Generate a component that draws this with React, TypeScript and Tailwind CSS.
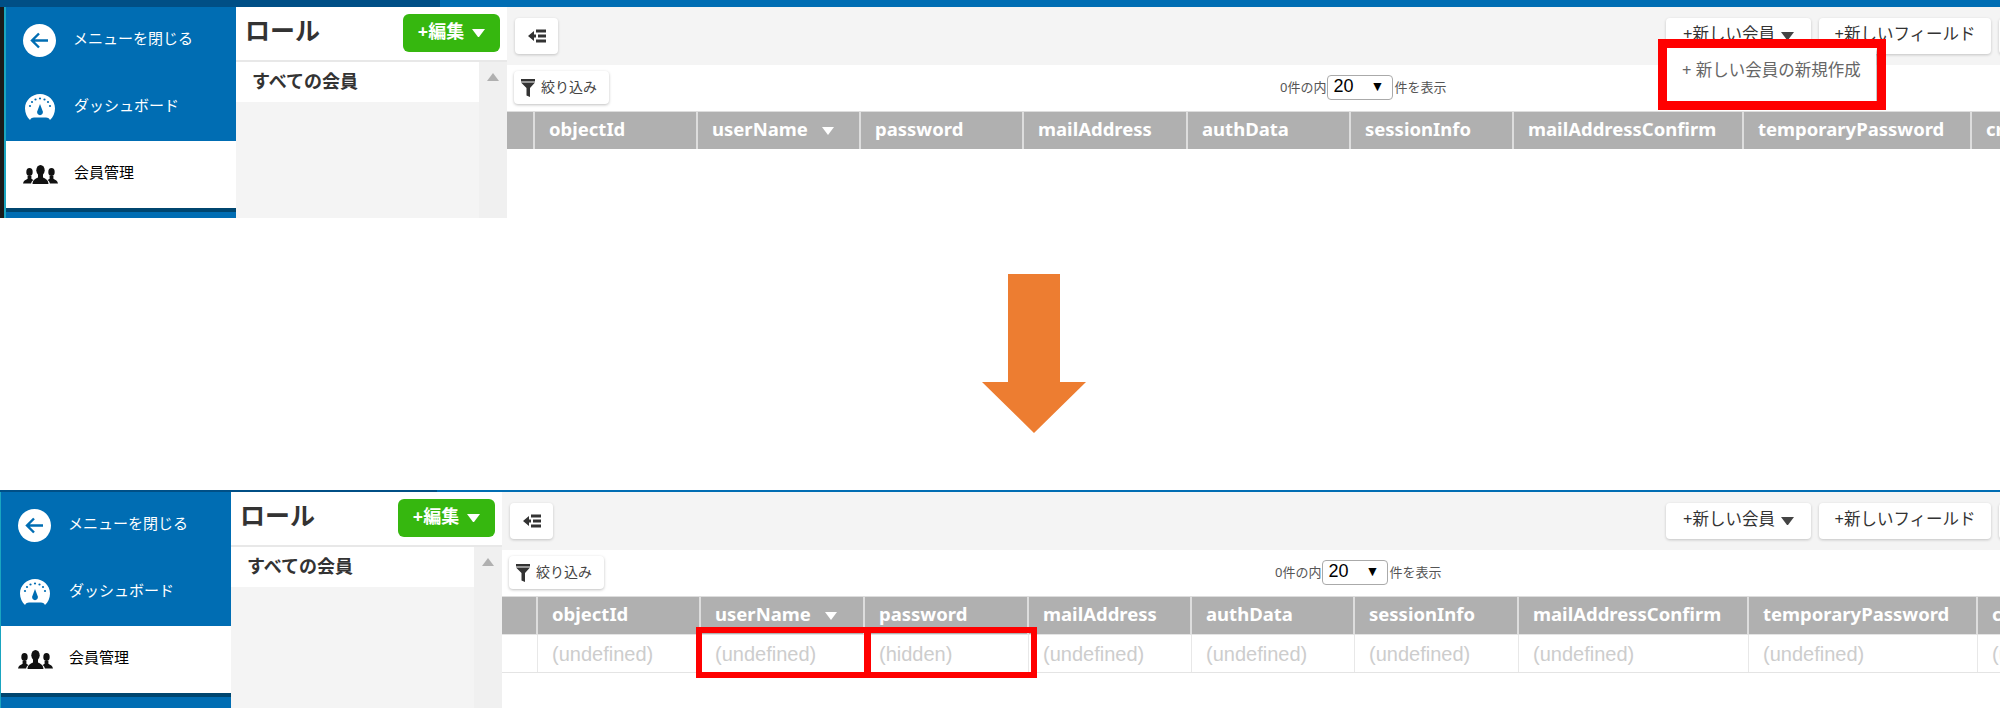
const jp = "font-['Noto_Sans','Noto_Sans_CJK_JP',sans-serif]"

interface Column {
  name: string
  width: string
  sorted?: boolean
  value?: string
}

const topColumns: Column[] = [
  { name: 'objectId', width: 'w-[163px]' },
  { name: 'userName', width: 'w-[163px]', sorted: true },
  { name: 'password', width: 'w-[163px]' },
  { name: 'mailAddress', width: 'w-[164px]' },
  { name: 'authData', width: 'w-[163px]' },
  { name: 'sessionInfo', width: 'w-[163px]' },
  { name: 'mailAddressConfirm', width: 'w-[230px]' },
  { name: 'temporaryPassword', width: 'w-[228px]' },
  { name: 'createDate', width: 'w-[163px]' },
]

const bottomColumns: Column[] = [
  { name: 'objectId', width: 'w-[163px]' },
  { name: 'userName', width: 'w-[164px]', sorted: true },
  { name: 'password', width: 'w-[164px]', value: '(hidden)' },
  { name: 'mailAddress', width: 'w-[163px]' },
  { name: 'authData', width: 'w-[163px]' },
  { name: 'sessionInfo', width: 'w-[164px]' },
  { name: 'mailAddressConfirm', width: 'w-[230px]' },
  { name: 'temporaryPassword', width: 'w-[229px]' },
  { name: 'createDate', width: 'w-[163px]' },
]

function BackIcon() {
  return (
    <svg width="33" height="33" viewBox="0 0 33 33">
      <circle cx="16.5" cy="16.5" r="16.5" fill="#fff" />
      <path d="M25 16.5H9.500M16 9.500l-7 7 7 7" fill="none" stroke="#006db3" strokeWidth="2.4" />
    </svg>
  )
}

function GaugeIcon() {
  return (
    <svg width="30" height="28" viewBox="0 0 30 28">
      <path d="M15 0C6.700 0 0 6.500 0 14.500c0 4.500 2 8.700 5 11.500 1-1.600 2.400-2.400 4-2.400h12c1.600 0 3 .8 4 2.400 3-2.800 5-7 5-11.500C30 6.500 23.300 0 15 0z" fill="#fff" />
      <g fill="#006db3">
        <circle cx="5" cy="12" r="1.100" />
        <circle cx="7" cy="8" r="1.100" />
        <circle cx="10.500" cy="5.500" r="1.100" />
        <circle cx="15" cy="4.500" r="1.100" />
        <circle cx="19.500" cy="5.500" r="1.100" />
        <circle cx="23" cy="8" r="1.100" />
        <circle cx="25" cy="12" r="1.100" />
        <path d="M15 10l2.800 7.500a2.900 2.900 0 1 1-5.600 0z" />
      </g>
    </svg>
  )
}

function MembersIcon() {
  return (
    <svg width="35" height="19" viewBox="0 0 35 19" fill="#111">
      <ellipse cx="6.500" cy="7" rx="3.200" ry="4" />
      <path d="M0 18.500c.5-3 2.300-3.500 4.600-4.800V11h3.800v2.700c.8.500 1.500.8 2 1.200-1.300 1-2 2-2.300 3.600z" />
      <ellipse cx="28.500" cy="7" rx="3.200" ry="4" />
      <path d="M35 18.500c-.5-3-2.300-3.500-4.600-4.800V11h-3.800v2.700c-.8.500-1.500.8-2 1.200 1.300 1 2 2 2.300 3.600z" />
      <ellipse cx="17.500" cy="5.200" rx="4.200" ry="5.200" />
      <path d="M9.500 19c.3-4 2.500-5 5.500-6.500V9h5v3.500c3 1.500 5.200 2.500 5.500 6.500z" />
    </svg>
  )
}

function CollapseIcon() {
  return (
    <svg width="18" height="14" viewBox="0 0 18 14" fill="#333">
      <path d="M0 7l6-5v3.500h2v3H6V12z" />
      <path d="M8 .5h10v3H8zM10 5.500h8v3h-8zM8 10.500h10v3H8z" />
    </svg>
  )
}

function FilterIcon() {
  return (
    <svg width="14" height="18" viewBox="0 0 14 18" fill="#333">
      <path d="M0 0h14v2.500H0zM0 3.500h14L9 9v9l-3.500-1.500V9z" />
    </svg>
  )
}

function Triangle({ className }: { className: string }) {
  return (
    <svg viewBox="0 0 12 8" className={className}>
      <path d="M0 0h12L6 8z" fill="currentColor" />
    </svg>
  )
}

function ToolButton({ children, className }: { children?: React.ReactNode; className: string }) {
  return (
    <div className={`flex h-[36px] shrink-0 items-center rounded bg-white text-[16.5px] text-[#333] shadow-[0_1px_3px_rgba(0,0,0,0.2)] ${className}`}>
      {children}
    </div>
  )
}

function Sidebar() {
  return (
    <div className="flex w-[230px] shrink-0 flex-col bg-[#006db3] text-[15px]">
      <div className="flex h-[67px] items-center gap-[17px] pl-[17px] text-white">
        <BackIcon />
        <span className="pb-[5px]">メニューを閉じる</span>
      </div>
      <div className="flex h-[67px] items-center gap-[19px] pl-[19px] text-white">
        <GaugeIcon />
        <span className="pb-[4px]">ダッシュボード</span>
      </div>
      <div className="flex h-[67px] items-center gap-[16px] bg-white pl-[17px] text-black">
        <MembersIcon />
        <span className="pb-[5px]">会員管理</span>
      </div>
      <div className="h-[4px] bg-[#00466f]" />
    </div>
  )
}

function RolePanel() {
  return (
    <div className="flex w-[271px] shrink-0 flex-col bg-[#f4f4f4]">
      <div className="flex h-[55px] items-start justify-between border-b-2 border-[#e8e8e8] bg-white pl-[9px] pr-[7px] pt-[7px]">
        <span className="text-[25px] leading-[32px] font-bold text-[#333]">ロール</span>
        <div className="flex h-[38px] w-[97px] items-center justify-center gap-[8px] rounded-md bg-[#36b70f] text-[18px] font-bold text-white">
          <span className="pb-[3px]">+編集</span>
          <Triangle className="w-[13px] text-white" />
        </div>
      </div>
      <div className="flex flex-1">
        <div className="h-[40px] w-[243px] bg-white pl-[16px] text-[18px] leading-[38px] font-bold text-[#333]">
          すべての会員
        </div>
        <div className="flex flex-1 justify-center bg-[#f0f0f0] pt-[11px]">
          <Triangle className="h-[8px] w-[14px] rotate-180 text-[#b0b0b0]" />
        </div>
      </div>
    </div>
  )
}

function MemberTable({ columns, hasRow, firstCol }: { columns: Column[]; hasRow?: boolean; firstCol: string }) {
  return (
    <div className="flex flex-col">
      <div className="flex h-[38px] border-t border-[#ddd] bg-[#b0b0b0] font-['Noto_Sans',sans-serif] text-[18.5px] font-bold text-white">
        <div className={`shrink-0 border-r-2 border-[#ddd] ${firstCol}`} />
        {columns.map(col => (
          <div key={col.name} className={`flex shrink-0 items-center gap-[14px] border-r-2 border-[#ddd] pb-[3px] pl-[14px] ${col.width}`}>
            {col.name}
            {col.sorted && <Triangle className="mt-[4px] w-[12px] text-white" />}
          </div>
        ))}
      </div>
      {hasRow && (
        <div className="flex h-[39px] border-t border-b border-[#e4e4e4] font-['Liberation_Sans',sans-serif] text-[20px] text-[#cdcdcd]">
          <div className={`shrink-0 border-r border-[#e8e8e8] ${firstCol}`} />
          {columns.map(col => (
            <div key={col.name} className={`flex shrink-0 items-center border-r border-[#e8e8e8] pl-[14px] ${col.width}`}>
              {col.value ?? '(undefined)'}
            </div>
          ))}
        </div>
      )}
    </div>
  )
}

function MainArea({ columns, hasRow, firstCol }: { columns: Column[]; hasRow?: boolean; firstCol: string }) {
  return (
    <div className="flex min-w-0 flex-1 flex-col overflow-hidden bg-white">
      <div className="flex h-[58px] shrink-0 items-center bg-[#f4f4f4] pl-[8px]">
        <ToolButton className="w-[43px] justify-center">
          <CollapseIcon />
        </ToolButton>
        <div className="-mr-[99px] ml-auto flex gap-[8px]">
          <ToolButton className="w-[145px] justify-center gap-[6px]">
            <span className="pb-[4px]">+新しい会員</span>
            <Triangle className="w-[13px] text-[#444]" />
          </ToolButton>
          <ToolButton className="w-[172px] justify-center">
            <span className="pb-[4px]">+新しいフィールド</span>
          </ToolButton>
          <ToolButton className="w-[100px]" />
        </div>
      </div>
      <div className="flex h-[46px] shrink-0 items-center pb-[1px] pl-[7px]">
        <div className="flex h-[33px] w-[95px] items-center gap-[6px] rounded bg-white pl-[7px] text-[14px] text-[#444] shadow-[0_1px_3px_rgba(0,0,0,0.25)]">
          <FilterIcon />
          <span className="pb-[2px]">絞り込み</span>
        </div>
        <div className="ml-[671px] flex items-center text-[13px] text-[#555]">
          0件の内
          <div className="mx-[1px] flex h-[25px] w-[66px] items-center justify-between rounded-sm border border-[#aaa] bg-white pl-[5px] pr-[8px] font-['Liberation_Sans',sans-serif] text-[18px] text-black">
            <span className="pb-[2px]">20</span>
            <span className="pb-[2px] text-[14px]">▼</span>
          </div>
          件を表示
        </div>
      </div>
      <MemberTable columns={columns} hasRow={hasRow} firstCol={firstCol} />
    </div>
  )
}

function Annotation({ className }: { className: string }) {
  return <div className={`absolute border-[#ff0000] ${className}`} />
}

export default function App() {
  return (
    <div className={`flex h-[708px] w-[2000px] flex-col overflow-hidden bg-white ${jp}`}>
      {/* before */}
      <div className="relative h-[218px] shrink-0 overflow-hidden">
        <div className="flex h-[7px] bg-[#006db3]">
          <div className="w-[440px] bg-[#004f86]" />
        </div>
        <div className="flex h-[211px]">
          <div className="w-[4px] shrink-0 bg-[#1a1a1a]" />
          <div className="w-[2px] shrink-0 bg-[#1aa5c0]" />
          <Sidebar />
          <RolePanel />
          <MainArea columns={topColumns} firstCol="w-[28px]" />
        </div>
        <div className="absolute left-[1667px] top-[48px] flex h-[53px] w-[209px] bg-white pl-[15px] pt-[10px] text-[16.5px] text-[#666] shadow-[1px_2px_3px_rgba(0,0,0,0.35)]">
          + 新しい会員の新規作成
        </div>
        <Annotation className="left-[1658px] top-[39px] h-[71px] w-[228px] border-[9px]" />
      </div>

      {/* arrow */}
      <div className="flex h-[272px] shrink-0 items-start justify-center pt-[56px] pl-[68px]">
        <svg width="104" height="159" viewBox="0 0 104 159">
          <path d="M26 0h52v108h26L52 159 0 108h26z" fill="#ed7d31" />
        </svg>
      </div>

      {/* after */}
      <div className="relative h-[218px] shrink-0 overflow-hidden">
        <div className="flex h-[2px] bg-[#006db3]">
          <div className="w-[437px] bg-[#004f86]" />
        </div>
        <div className="flex h-[216px]">
          <div className="w-[1px] shrink-0 bg-[#1aa5c0]" />
          <Sidebar />
          <RolePanel />
          <MainArea columns={bottomColumns} hasRow firstCol="w-[36px]" />
        </div>
        <Annotation className="left-[696px] top-[137px] h-[51px] w-[174px] border-[6px]" />
        <Annotation className="left-[865px] top-[137px] h-[51px] w-[172px] border-[6px]" />
      </div>
    </div>
  )
}
